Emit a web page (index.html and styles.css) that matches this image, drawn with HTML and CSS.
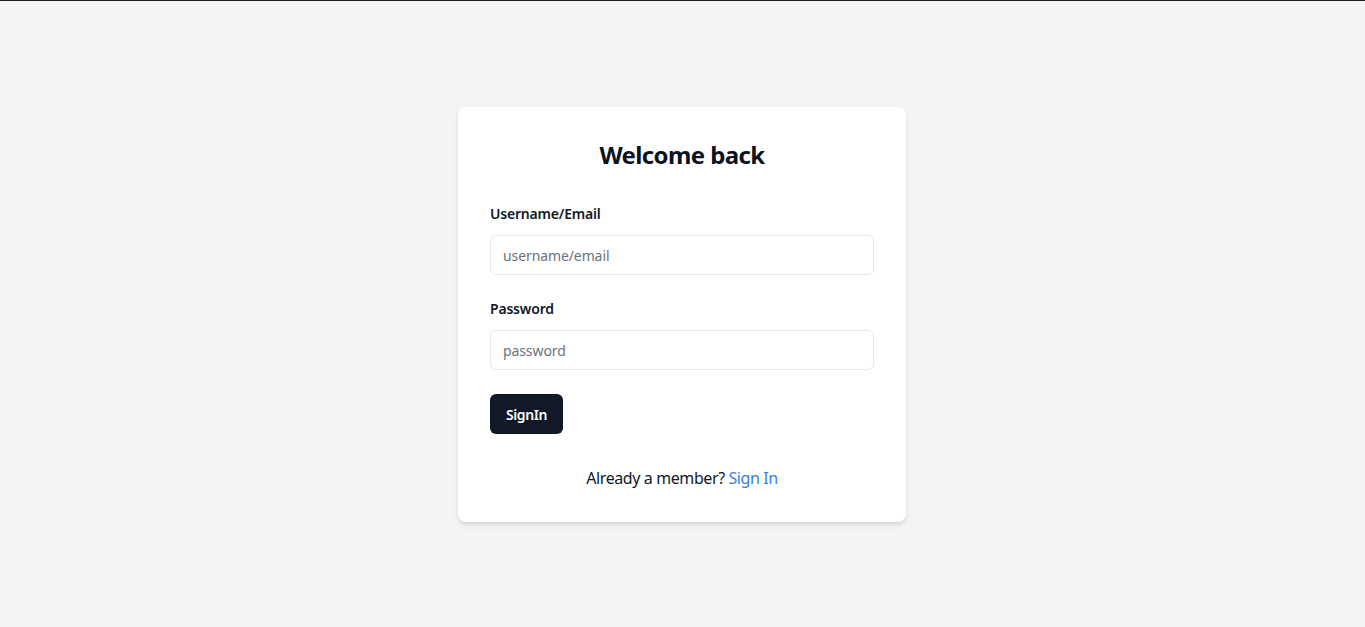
FILE: index.html
```html
<!DOCTYPE html>
<html lang="en">
<head>
<meta charset="utf-8">
<title>Welcome back</title>
<link rel="stylesheet" href="styles.css">
</head>
<body>
<main class="page">
  <form class="card">
    <h1 class="title">Welcome back</h1>
    <div class="field">
      <label class="label" for="user">Username/Email</label>
      <input class="input" id="user" type="text" placeholder="username/email">
    </div>
    <div class="field">
      <label class="label" for="pass">Password</label>
      <input class="input" id="pass" type="password" placeholder="password">
    </div>
    <button class="btn" type="button">SignIn</button>
    <p class="footer">Already a member? <a class="link" href="#">Sign In</a></p>
  </form>
</main>
</body>
</html>
```

FILE: styles.css
```css
* { box-sizing: border-box; }
html, body { margin: 0; padding: 0; }
body {
  font-family: "Noto Sans", "Open Sans", sans-serif;
  background: #f3f4f6;
  color: #111827;
  border-top: 1px solid #1f1f1f;
}
.page {
  min-height: calc(100vh - 1px);
  padding: 1px 1px 0 0;
  display: flex;
  align-items: center;
  justify-content: center;
}
.card {
  width: 448px;
  background: #ffffff;
  border-radius: 8px;
  padding: 32px;
  box-shadow: 0 4px 6px -1px rgba(0,0,0,0.1), 0 2px 4px -2px rgba(0,0,0,0.1);
  display: flex;
  flex-direction: column;
}
.title {
  margin: 0 0 33px;
  font-size: 24px;
  line-height: 32px;
  font-weight: 700;
  text-align: center;
  color: #0b1220;
  letter-spacing: -0.6px;
}
.field {
  display: flex;
  flex-direction: column;
  margin-bottom: 24px;
}
.label {
  font-size: 14px;
  line-height: 20px;
  font-weight: 600;
  margin-bottom: 11px;
  color: #111827;
  letter-spacing: -0.2px;
}
.input {
  height: 40px;
  width: 100%;
  border: 1px solid #e5e7eb;
  border-radius: 6px;
  padding: 0 12px;
  font-family: inherit;
  font-size: 14px;
  color: #111827;
  background: #fff;
  outline: none;
  letter-spacing: -0.1px;
}
.input::placeholder { color: #6b7280; }
.btn {
  align-self: flex-start;
  height: 40px;
  padding: 0 16px;
  background: #111827;
  color: #fff;
  border: none;
  border-radius: 6px;
  font-family: inherit;
  font-size: 14px;
  font-weight: 600;
  letter-spacing: -0.4px;
  cursor: pointer;
}
.footer {
  margin: 32px 0 0;
  text-align: center;
  font-size: 16px;
  line-height: 24px;
  color: #111827;
  letter-spacing: -0.4px;
}
.link {
  color: #3b7ddd;
  text-decoration: none;
}
```
